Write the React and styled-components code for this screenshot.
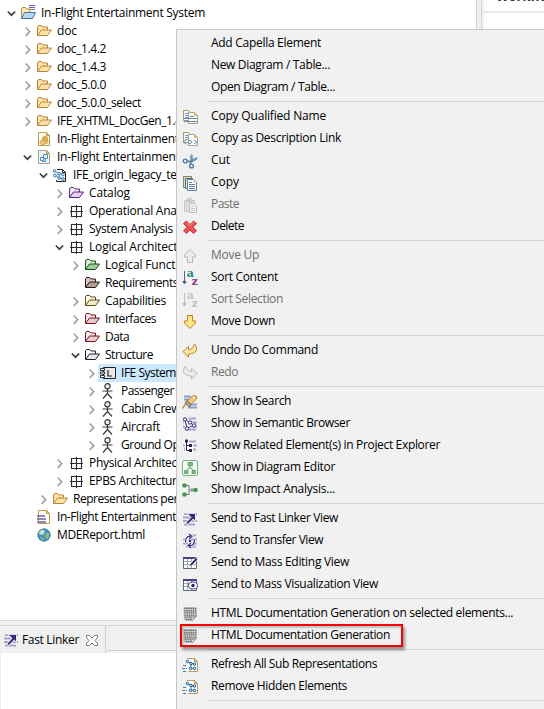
import React, { useLayoutEffect, useRef } from "react";
import styled, { createGlobalStyle, css } from "styled-components";

const GlobalStyle = createGlobalStyle`
  * { box-sizing: border-box; }
  html, body { margin: 0; padding: 0; overflow: hidden; background: #f0f0f0; }
  body { font-family: "Open Sans", "Noto Sans", sans-serif; font-size: 12px; color: #000; }
`;

/* ---------- icons ---------- */

const Svg = styled.svg`
  width: 16px;
  height: 16px;
  flex: none;
  display: block;
  overflow: visible;
`;

const Icon = ({ children }) => (
  <Svg viewBox="0 0 16 16" fill="none">{children}</Svg>
);

const Folder = ({ line, back, front }) => (
  <Icon>
    <path d="M1.500 12V4l1-1.500h3l1.500 1.500h4.500V7" fill={back} stroke={line} />
    <path d="M1.500 12.500L5.500 7H15.500L11.500 12.500z" fill={front} stroke={line} strokeLinejoin="round" />
  </Icon>
);

const Project = () => (
  <Icon>
    <path d="M9 .5h6M9 2.500h6M10 4.500h5" stroke="#6a68ad" />
    <path d="M1.500 13V4l1-1.500h3L7 4h3v3" fill="#ffe9ad" stroke="#bd8b3d" />
    <path d="M1.500 13.500L4.500 7.500h11l-3 6z" fill="#b9d5f5" stroke="#3973ae" />
  </Icon>
);

const Sheet = ({ children, line = "#c09a4a" }) => (
  <>
    <path d="M2.500 1.500h8l3 3v10h-11z" fill="#fdfdfb" stroke={line} />
    <path d="M10.500 1.500v3h3z" fill="#edc067" stroke={line} />
    {children}
  </>
);

const AfmFile = () => (
  <Icon>
    <Sheet>
      <path d="M9 5l2.500 1.200v2.500L9 10 6.500 8.700V6.200z" fill="#e0ae45" stroke="#c18c2f" strokeWidth=".6" />
      <path d="M6.500 9L9 10v3l-2.500 1L4 12.700V10zM9.800 10l2.200-.8v2.500L10 13z" fill="#edc774" stroke="#c18c2f" strokeWidth=".6" />
    </Sheet>
  </Icon>
);

const AirdFile = () => (
  <Icon>
    <path d="M2.500 1.500h8l3 3v10h-11z" fill="#eaf4fb" stroke="#a4a08a" />
    <path d="M10.500 1.500v3h3z" fill="#edc067" stroke="#c09a4a" />
    <path d="M7.500 5.500h4v4h-4zM4.500 8.500h3v3h-3zM7.500 9.500h2v3h-3v-1" stroke="#4d8fbd" />
  </Icon>
);

const ModelFile = () => (
  <Icon>
    <path d="M4.500 2.500h6l3 3v9h-9" fill="#fff" />
    <path d="M5 2.500h5.500l3 3v9h-9V13" stroke="#222" />
    <path d="M10.500 2.500v3h3" stroke="#222" />
    <path d="M3 4l4 3 4 0M3 8l4 3 4 1M7 7l1 4" stroke="#1d5b91" strokeWidth=".7" />
    {[[2.500, 4], [7, 6.500], [11, 7.500], [3, 8.500], [7, 11], [11, 12]].map(([x, y]) => (
      <circle key={`${x}-${y}`} cx={x} cy={y} r="1.400" fill="#c8e4f6" stroke="#2d6b9e" strokeWidth=".8" />
    ))}
  </Icon>
);

const Architecture = () => (
  <Icon>
    <path d="M3.500 3.500h10v10h-10zM8.500 2v13M2 8.500h13" stroke="#2c2c2c" strokeWidth="1.100" />
  </Icon>
);

const Actor = () => (
  <Icon>
    <circle cx="7.500" cy="3.200" r="2.600" fill="#eee" stroke="#3b3b3b" strokeWidth="1.200" />
    <path d="M7.500 5.700v5.300M2.500 8h10M7.500 10.500l-4.500 5M7.500 10.500l4.500 5" stroke="#3b3b3b" strokeWidth="1.200" />
  </Icon>
);

const LogicalComponent = () => (
  <Icon>
    <path d="M3.500 2.500h12v11h-12z" fill="#e4e9ee" stroke="#222" />
    <path d="M.5 3.500h4v2h-4zM.5 7h4v2h-4zM.5 10.500h4v2h-4z" fill="#fff" stroke="#222" strokeWidth=".9" />
    <path d="M8 5v6h4" stroke="#222" strokeWidth="1.200" />
  </Icon>
);

const TextFile = () => (
  <Icon>
    <Sheet />
    <path d="M1 7h8M1 10h9M1 13h9" stroke="#6d62a9" strokeWidth="1.700" />
  </Icon>
);

const Globe = () => (
  <Icon>
    <circle cx="8" cy="8" r="6.500" fill="#4a92c5" />
    <path d="M3 4q2-2.500 4-2l2 1-2 3-3 1-2 2zM10 6l4 0q.5 4-3 6l-2-2zM4 10l3 1 1 3q-3-.5-4-4" fill="#8dbb79" />
    <circle cx="5.800" cy="5.200" r="2.600" fill="#e9f7fb" opacity=".7" />
    <circle cx="8" cy="8" r="6" stroke="#3c77a3" />
  </Icon>
);

const CopyPages = ({ link }) => (
  <Icon>
    <path d="M1.500 1.500h5l2 2v8h-7z" fill="#f4f7fb" stroke="#b09a62" />
    <path d="M3 4.500h3M3 6.500h3M3 8.500h3" stroke="#7794bd" />
    <path d="M6.500 3.500h6l3 3v8h-9z" fill="#fafcfe" stroke="#a5a48e" />
    <path d="M12.500 3.500v3h3z" fill="#edc067" stroke="#c8a352" strokeWidth=".7" />
    {link ? (
      <path d="M4 9l-2.500 2L4 13M12 9l3 2-3 2M6 11l2-2 2 2-2 2z" stroke="#6f8db3" />
    ) : (
      <path d="M8 7.500h4M2 9.500h13M2 12.500h13" stroke="#6689bb" />
    )}
  </Icon>
);

const Copy = () => (
  <Icon>
    <path d="M1.500 1.500h8v11h-8z" fill="#e4d8a8" stroke="#8b8661" />
    <path d="M3.500 3.500h7v10h-7z" fill="#d8e7f4" stroke="#4e748d" />
    <path d="M5.500 4.500h6l3 3v8h-9z" fill="#fff" stroke="#65839f" />
    <path d="M11.500 4.500v3h3z" fill="#f0c875" />
    <path d="M7 7.500h3M7 9.500h6M7 11.500h6M7 13.500h6" stroke="#5580ae" />
  </Icon>
);

const Cut = () => (
  <Icon>
    <path d="M9 9L8.500 3 10 1.500l.5 6.500zM7 8.500l8-4-.5 2L8 10z" fill="#8da5bf" stroke="#637f9d" strokeWidth=".8" />
    <path d="M5 8l3 .5 1 3" stroke="#5a7ca2" strokeWidth="1.300" />
    <circle cx="3.200" cy="8" r="1.900" stroke="#4976a3" strokeWidth="1.300" />
    <circle cx="9.500" cy="13" r="1.900" stroke="#4976a3" strokeWidth="1.300" />
  </Icon>
);

const Paste = () => (
  <Icon>
    <path d="M2.500 3.500h10v11h-10z" fill="#dedede" stroke="#c7c7c7" />
    <path d="M5 4.500V2h1.500V1h2v1H10v2.500z" fill="#d2d2d2" stroke="#bcbcbc" strokeWidth=".8" />
    <path d="M7.500 6.500h5l2 2v7h-7z" fill="#f4f4f4" stroke="#bebebe" />
    <path d="M9 9.500h4M9 11.500h4M9 13.500h4" stroke="#c7c7c7" />
  </Icon>
);

const Delete = () => (
  <Icon>
    <path d="M4.500 2L8 5.500 11.500 2 14.500 4.500 11 8.200l3.500 3.600-3 2.700L8 11l-3.500 3.500-3-2.700L5 8.200 1.500 4.500z" fill="#ea5151" stroke="#cc343b" strokeLinejoin="round" />
    <path d="M4.500 3.200L8 6.500l3.500-3.300" stroke="#f3908b" />
  </Icon>
);

const Arrow = ({ down, line, fill }) => (
  <Icon>
    <path
      transform={down ? "rotate(180 8 8)" : undefined}
      d="M8 1.500l5.500 5.500v2h-3v5.500h-5V9h-3V7z"
      fill={fill}
      stroke={line}
      strokeLinejoin="round"
    />
  </Icon>
);

const SortPair = styled.g`
  font-family: "DejaVu Serif", serif;
  font-size: 11px;
  font-weight: 700;
`;

const Sort = ({ muted }) => (
  <Icon>
    <path d="M2.500 1v11M.8 11.500l1.700 2.500 1.700-2.500z" stroke={muted ? "#bebebe" : "#496987"} fill={muted ? "#bebebe" : "#496987"} />
    <SortPair>
      <text x="4.800" y="7" fill={muted ? "#c4c4c4" : "#1d837c"}>a</text>
      <text x="9.400" y="15" fill={muted ? "#c0c0c0" : "#8b398f"}>z</text>
    </SortPair>
  </Icon>
);

const Turn = ({ flip, line, fill }) => (
  <Icon>
    <path
      transform={flip ? "translate(16 0) scale(-1 1)" : undefined}
      d="M1 8.500L6.500 3.500v3q4.500.2 5.500-5l1.500.5q4.500 8-7 9.200v3z"
      fill={fill}
      stroke={line}
      strokeLinejoin="round"
    />
  </Icon>
);

const Search = () => (
  <Icon>
    <path d="M2 2.500h7M2 5.500h6M8 10.500h7M6 13.500h9" stroke="#8a9ec7" strokeWidth="2" />
    <path d="M5.500 7l5.500-5.500 3.500.5v3L9 10z" fill="#f6cc73" stroke="#b68b40" />
    <path d="M4.500 6.500L9 10.500 8 13 3 9.500z" fill="#aaa79b" stroke="#777568" />
    <path d="M3.500 10l-3 4.500" stroke="#c39a4a" strokeWidth="1.500" />
    <circle cx="12" cy="3.800" r=".8" fill="#fff" />
  </Icon>
);

const Stripes = () => (
  <path d="M7 2.500h7M1 6.500h4M9 6.500h6M1 10.500h5M10 10.500h5M4 13.500h10" stroke="#a9a4cf" strokeWidth="2" />
);

const Semantic = () => (
  <Icon>
    <Stripes />
    <path d="M3 3.500l2 9M3 3.500l5 3 4 3M5 12.500l6-3" stroke="#fff" strokeWidth="3" />
    <path d="M3 3.500l2 9M3 3.500l5 3 4 3M5 12.500l6-3" stroke="#302a75" />
    {[[3, 3.5], [8, 6.5], [12, 9.5], [5, 12.5]].map(([x, y]) => (
      <circle key={x} cx={x} cy={y} r="1.700" fill="#fff" stroke="#302a75" />
    ))}
  </Icon>
);

const Related = () => (
  <Icon>
    <path d="M2 3.500h12M1 7.500h14M2 11.500h12" stroke="#aaa7c5" strokeWidth="2" />
    <path d="M2 1h5v4h4v10H3V5H2z" fill="#fff" />
    <path d="M4.500 2v10.500H8M4.500 7.500H8" stroke="#24245c" />
    <path d="M3 1.500h3v3H3zM7 6h3v3H7zM7 11h3v3H7z" fill="#28285f" />
  </Icon>
);

const DiagramEditor = () => (
  <Icon>
    <rect x=".5" y=".5" width="15" height="15" rx="1.500" fill="#f4faf4" stroke="#7fb18a" />
    <path d="M8 5v4M8 6.500L4.500 11M8 6.500l3.500 4.500" stroke="#6ea37a" />
    <path d="M6 2.500h4.500v3H6zM2.500 10.500H6v3H2.500zM10 10.500h3.500v3H10z" fill="#80b783" stroke="#5a9866" strokeWidth=".8" />
  </Icon>
);

const Impact = () => (
  <Icon>
    <path d="M3 3.500h4v9H3M7 8h6M10 6v4" stroke="#70767a" />
    <circle cx="2.500" cy="3.500" r="2.300" fill="#42965a" />
    <circle cx="2.500" cy="12.500" r="2.300" fill="#42965a" />
    <circle cx="13.500" cy="8" r="2.300" fill="#42965a" />
  </Icon>
);

const FastLinker = () => (
  <Icon>
    <path d="M2 3h13M1 6.500h13M1 10h14M2 13.500h11" stroke="#aaa4cd" strokeWidth="2" />
    <path d="M6 3H13v6.500l-1.800-1.900-5.400 5.400-1.400-1.200 5.200-5.500z" fill="#302a7b" stroke="#f0eff6" strokeWidth="1.600" paintOrder="stroke" />
  </Icon>
);

const Transfer = () => (
  <Icon>
    <Stripes />
    <path d="M3.500 9q0-6 5-5.500M7 1l3 2.500L7 6M12.500 7q0 6-5 5.500M9 10l-3 2.500L9 15" stroke="#fff" strokeWidth="2.400" />
    <path d="M3.500 9q0-6 5-5.500M7 1l3 2.500L7 6M12.500 7q0 6-5 5.500M9 10l-3 2.500L9 15" stroke="#302a7b" strokeWidth="1.200" />
    <circle cx="8" cy="8" r="1.300" fill="#302a7b" />
  </Icon>
);

const MassTable = ({ view }) => (
  <Icon>
    <path d="M1.500 2.500h13v11h-13z" fill="#fff" stroke="#596b75" />
    <path d="M1 3h14" stroke="#4b4383" strokeWidth="2" />
    <path d="M2 6.500h12M2 9.500h12M5.500 4v9M9.500 4v9" stroke="#9aabb0" />
    {view ? (
      <>
        <ellipse cx="11" cy="8.500" rx="4.500" ry="3.500" fill="#fff" stroke="#4b4383" />
        <circle cx="11" cy="8.500" r="1.700" fill="#29216c" />
      </>
    ) : (
      <path d="M7 12l1-3 6-6.500 2 1.500-6 6.500z" fill="#28236d" stroke="#fff" strokeWidth=".8" />
    )}
  </Icon>
);

const HtmlDoc = () => (
  <Icon>
    <path d="M1.500 1h12.500l.8 1v8.500L10.500 15h-7L2 13z" fill="#b4b4b4" />
    <path d="M2 2.500h12M2 4.700h12M2 6.900h12M2.500 9.100h11M3 11.300h7M3.500 13.500h6" stroke="#666" strokeDasharray="1.300 .9" />
    <path d="M2 3.600h12M2 8h12M3 12.400h6" stroke="#e8e8e8" strokeWidth=".8" strokeDasharray="1 1" />
    <path d="M14.500 9.500L10.500 14.500 8.500 10.500 11.500 12z" fill="#f7f7f7" stroke="#888" strokeWidth=".8" />
  </Icon>
);

const SubRepresentation = () => (
  <Icon>
    <path d="M5 1.500h7.500l3 3v10H5z" fill="#fff" />
    <path d="M5 1.500h7.500l3 3v10H6" stroke="#b49c61" />
    <path d="M12.500 1.500v3h3z" fill="#edbd56" stroke="#b49c61" />
    <path d="M6 5l3 1.500 3.500.5M9 11.500l4-.5M9 7v4" stroke="#1b5d91" strokeWidth=".8" />
    {[[5.500, 4.500], [9, 6.500], [12.500, 7], [8.500, 11.500], [12.500, 11.500]].map(([x, y]) => (
      <circle key={`${x}-${y}`} cx={x} cy={y} r="1.300" fill="#c4e2f4" stroke="#1b5d91" />
    ))}
    <path d="M1 8.500h4M0 11.500h5M1 14.500h3" stroke="#3d7cae" strokeDasharray="3 1" />
  </Icon>
);

const Partial = () => (
  <Icon>
    <path d="M2 1.500h12" stroke="#222" strokeDasharray="1 1" />
    <path d="M2.500 3v10h11V3z" fill="#fff0bd" stroke="#d7ac47" />
  </Icon>
);

const Chevron = ({ open }) => (
  <Icon>
    {open ? (
      <path d="M3.800 6.500l3.700 3.700L11.200 6.500" stroke="#404040" strokeWidth="1.700" />
    ) : (
      <path d="M5.700 4.500l4 4.200-4 4.200" stroke="#a3a3a3" strokeWidth="1.700" />
    )}
  </Icon>
);

const CloseTab = () => (
  <Icon>
    <path d="M2.500 3.500h3L8 6l2.500-2.500h3v2L11 8.500l2.500 3v2h-3L8 11l-2.500 2.500h-3v-2L5 8.500l-2.500-3z" fill="#fff" stroke="#6a6a6a" strokeWidth=".9" />
  </Icon>
);

/* ---------- text ---------- */

const LabelText = styled.span`
  white-space: pre;
  line-height: 16px;
  flex: none;
`;

// Spreads a label over a given advance width.
const Label = ({ text, width }) => {
  const ref = useRef(null);
  useLayoutEffect(() => {
    const el = ref.current;
    el.style.letterSpacing = "0px";
    const natural = el.getBoundingClientRect().width;
    el.style.letterSpacing = `${(width - natural) / text.length}px`;
  }, [text, width]);
  return <LabelText ref={ref}>{text}</LabelText>;
};

/* ---------- workbench ---------- */

const Workbench = styled.div`
  position: relative;
  width: 544px;
  height: 709px;
  overflow: hidden;
  display: flex;
  flex-direction: column;
  background: #f0f0f0;
`;

const Upper = styled.div`
  display: flex;
  height: 621px;
  flex: none;
`;

const Explorer = styled.div`
  width: 477px;
  flex: none;
  background: #fff;
  border-right: 1px solid #cfcfcf;
  border-bottom: 1px solid #d6d6d6;
  padding-top: 4px;
`;

const Editor = styled.div`
  flex: 1;
  min-width: 0;
  margin-left: 4px;
  border-left: 1px solid #d6d6d6;
  padding-left: 2px;
`;

const EditorHeader = styled.div`
  height: 13px;
  overflow: hidden;
  background: #fff;
  border-bottom: 2px solid #e8e8e8;
  padding-left: 12px;
`;

const EditorTitle = styled.div`
  margin-top: -13px;
  font-size: 13px;
  line-height: 18px;
  font-weight: 700;
  white-space: nowrap;
  color: #333;
`;

const EditorBody = styled.div`
  height: 607px;
  background: #fff;
`;

const TreeRow = styled.div`
  display: flex;
  align-items: center;
  height: 18px;
  padding-left: ${(p) => 4 + p.$level * 16}px;
`;

const Node = styled.div`
  display: flex;
  align-items: center;
  gap: 5px;
  height: 18px;
  flex: 1;
  ${(p) => p.$selected && css`
    margin-left: -2px;
    padding-left: 2px;
    background: #cce8ff;
  `}
`;

const Indent = styled.div`
  width: 16px;
  flex: none;
`;

const TabStrip = styled.div`
  display: flex;
  margin-top: 4px;
  height: 28px;
  flex: none;
  border-top: 1px solid #d6d6d6;
`;

const Tab = styled.div`
  display: flex;
  align-items: center;
  width: 106px;
  padding-left: 3px;
  gap: 3px;
  border-right: 1px solid #d2d2d2;
`;

const TabClose = styled.div`
  margin-left: 2px;
`;

const TabRest = styled.div`
  flex: 1;
  height: 25px;
  border-bottom: 1px solid #d2d2d2;
`;

const ViewBody = styled.div`
  flex: 1;
  margin-left: 1px;
  background: #fff;
`;

/* ---------- context menu ---------- */

const Menu = styled.div`
  position: absolute;
  left: 176px;
  top: 29px;
  width: 380px;
  height: 700px;
  padding-top: 2px;
  background: #f1f1f1;
  border: 1px solid #c6c6c6;
`;

const MenuRow = styled.div`
  position: relative;
  display: flex;
  align-items: center;
  gap: 13px;
  height: 22px;
  padding-left: 5px;
  color: ${(p) => (p.$disabled ? "#6d6d6d" : "#000")};
`;

const IconSlot = styled.div`
  width: 16px;
  height: 16px;
  flex: none;
  margin-top: 1px;
`;

const Separator = styled.div`
  height: 7px;
  margin-left: 30px;
  padding-top: 3px;

  &::after {
    content: "";
    display: block;
    height: 1px;
    background: #d4d4d4;
  }
`;

const Highlight = styled.div`
  position: absolute;
  left: 3px;
  top: 0;
  width: 223px;
  height: 23px;
  border: 2px solid #f60000;
  box-shadow: 2px 3px 3px rgba(0, 0, 0, 0.4), inset 2px 2px 2px rgba(0, 0, 0, 0.2);
`;

const plain = <Folder line="#b9803c" back="#ffe2a6" front="#ffe3a8" />;
const arch = <Architecture />;
const actor = <Actor />;

const tree = [
  [0, "open", <Project />, "In-Flight Entertainment System", 164],
  [1, "closed", plain, "doc", 20],
  [1, "closed", plain, "doc_1.4.2", 49],
  [1, "closed", plain, "doc_1.4.3", 49],
  [1, "closed", plain, "doc_5.0.0", 49],
  [1, "closed", plain, "doc_5.0.0_select", 84],
  [1, "closed", plain, "IFE_XHTML_DocGen_1.4.2", 134],
  [1, "", <AfmFile />, "In-Flight Entertainment System.afm", 187],
  [1, "open", <AirdFile />, "In-Flight Entertainment System.aird", 188],
  [2, "open", <ModelFile />, "IFE_origin_legacy_test", 113],
  [3, "closed", <Folder line="#56267a" back="#f4e8fa" front="#e4d2ef" />, "Catalog", 41],
  [3, "closed", arch, "Operational Analysis", 110],
  [3, "closed", arch, "System Analysis", 84],
  [3, "open", arch, "Logical Architecture", 107],
  [4, "closed", <Folder line="#174d1c" back="#d9f0d2" front="#9dce97" />, "Logical Functions", 93],
  [4, "", <Folder line="#271b18" back="#d7c5bf" front="#b69d95" />, "Requirements", 73],
  [4, "closed", <Folder line="#5f4b19" back="#fffbe9" front="#f8edcb" />, "Capabilities", 61],
  [4, "closed", <Folder line="#74161c" back="#fbe9e9" front="#e9c9cc" />, "Interfaces", 51],
  [4, "closed", <Folder line="#74161c" back="#fbe9e9" front="#e9c9cc" />, "Data", 24],
  [4, "open", <Folder line="#222222" back="#ffffff" front="#e1e7ee" />, "Structure", 48],
  [5, "closed", <LogicalComponent />, "IFE System", 55, true],
  [5, "closed", actor, "Passenger", 53],
  [5, "closed", actor, "Cabin Crew", 59],
  [5, "closed", actor, "Aircraft", 39],
  [5, "closed", actor, "Ground Operator", 90],
  [3, "closed", arch, "Physical Architecture", 110],
  [3, "closed", arch, "EPBS Architecture", 94],
  [2, "closed", plain, "Representations per category", 152],
  [1, "", <TextFile />, "In-Flight Entertainment System.melodymodeller", 248],
  [1, "", <Globe />, "MDEReport.html", 88],
];

const menu = [
  [null, "Add Capella Element", 110],
  [null, "New Diagram / Table...", 119],
  [null, "Open Diagram / Table...", 124],
  "-",
  [<CopyPages />, "Copy Qualified Name", 115],
  [<CopyPages link />, "Copy as Description Link", 130],
  [<Cut />, "Cut", 19],
  [<Copy />, "Copy", 28],
  [<Paste />, "Paste", 28, "disabled"],
  [<Delete />, "Delete", 33],
  "-",
  [<Arrow line="#b7b7b7" fill="#ececec" />, "Move Up", 48, "disabled"],
  [<Sort />, "Sort Content", 67],
  [<Sort muted />, "Sort Selection", 72, "disabled"],
  [<Arrow down line="#bd841d" fill="#ffe58b" />, "Move Down", 64],
  "-",
  [<Turn line="#be8632" fill="#fbe3a2" />, "Undo Do Command", 107],
  [<Turn flip line="#bcbcbc" fill="#ebebeb" />, "Redo", 27, "disabled"],
  "-",
  [<Search />, "Show In Search", 80],
  [<Semantic />, "Show in Semantic Browser", 139],
  [<Related />, "Show Related Element(s) in Project Explorer", 229],
  [<DiagramEditor />, "Show in Diagram Editor", 124],
  [<Impact />, "Show Impact Analysis...", 124],
  "-",
  [<FastLinker />, "Send to Fast Linker View", 127],
  [<Transfer />, "Send to Transfer View", 112],
  [<MassTable />, "Send to Mass Editing View", 138],
  [<MassTable view />, "Send to Mass Visualization View", 167],
  "-",
  [<HtmlDoc />, "HTML Documentation Generation on selected elements...", 302],
  [<HtmlDoc />, "HTML Documentation Generation", 179, "marked"],
  "-",
  [<SubRepresentation />, "Refresh All Sub Representations", 166],
  [<SubRepresentation />, "Remove Hidden Elements", 136],
  "-",
  [<Partial />, "", 0],
];

export default function App() {
  return (
    <>
      <GlobalStyle />
      <Workbench>
        <Upper>
          <Explorer>
            {tree.map(([level, state, icon, text, width, selected], i) => (
              <TreeRow key={i} $level={level}>
                {state ? <Chevron open={state === "open"} /> : <Indent />}
                <Node $selected={selected}>
                  {icon}
                  <Label text={text} width={width} />
                </Node>
              </TreeRow>
            ))}
          </Explorer>
          <Editor>
            <EditorHeader>
              <EditorTitle>Workflow</EditorTitle>
            </EditorHeader>
            <EditorBody />
          </Editor>
        </Upper>
        <TabStrip>
          <Tab>
            <FastLinker />
            <Label text="Fast Linker" width={57} />
            <TabClose><CloseTab /></TabClose>
          </Tab>
          <TabRest />
        </TabStrip>
        <ViewBody />
        <Menu>
          {menu.map((item, i) =>
            item === "-" ? (
              <Separator key={i} />
            ) : (
              <MenuRow key={i} $disabled={item[3] === "disabled"}>
                <IconSlot>{item[0]}</IconSlot>
                {item[1] && <Label text={item[1]} width={item[2]} />}
                {item[3] === "marked" && <Highlight />}
              </MenuRow>
            )
          )}
        </Menu>
      </Workbench>
    </>
  );
}
